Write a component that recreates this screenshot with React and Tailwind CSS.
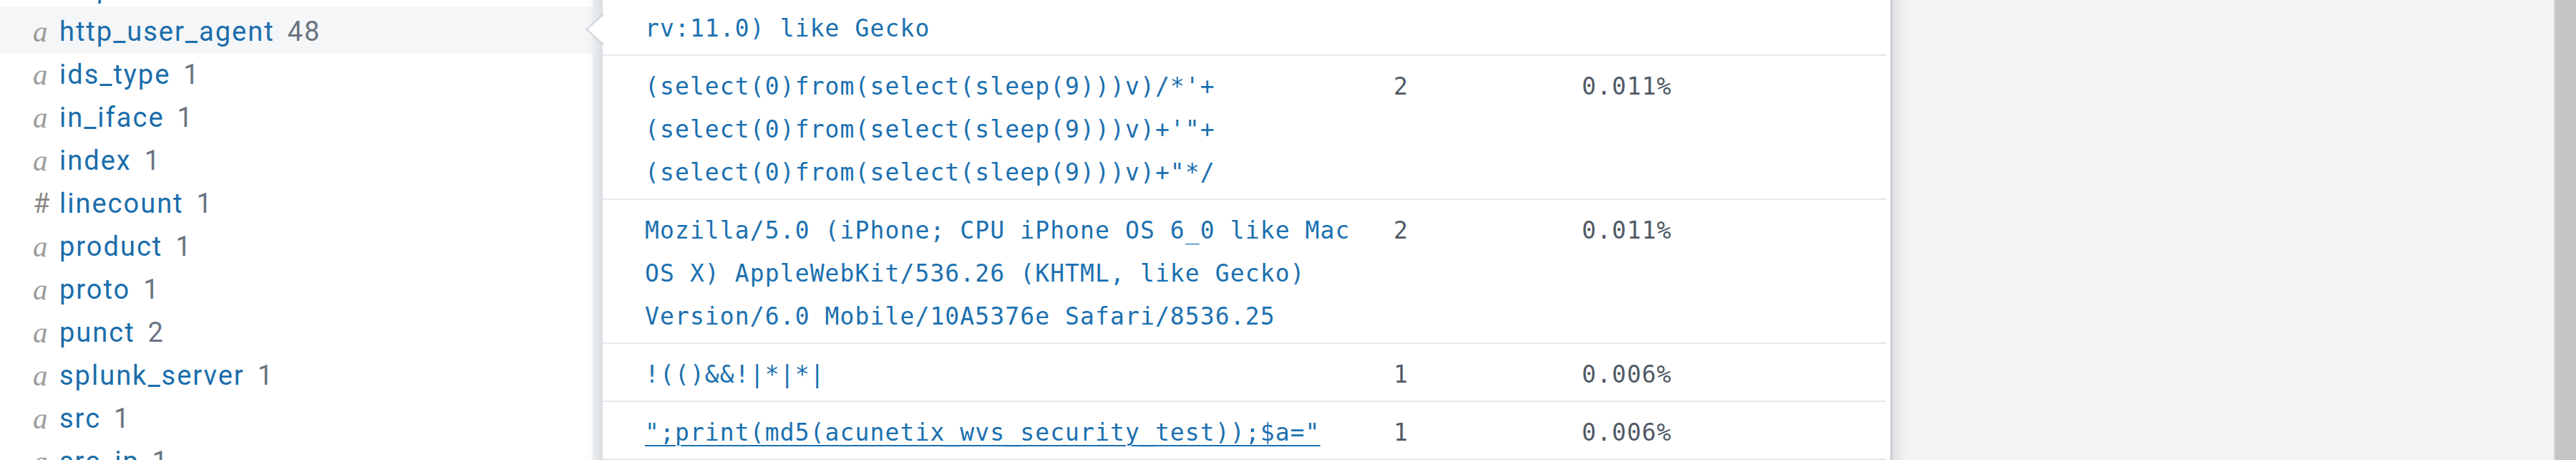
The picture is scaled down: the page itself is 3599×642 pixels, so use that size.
import React from 'react';

const fields = [
  { type: 'a', name: 'http_referrer', count: '1' },
  { type: 'a', name: 'http_user_agent', count: '48', active: true },
  { type: 'a', name: 'ids_type', count: '1' },
  { type: 'a', name: 'in_iface', count: '1' },
  { type: 'a', name: 'index', count: '1' },
  { type: '#', name: 'linecount', count: '1' },
  { type: 'a', name: 'product', count: '1' },
  { type: 'a', name: 'proto', count: '1' },
  { type: 'a', name: 'punct', count: '2' },
  { type: 'a', name: 'splunk_server', count: '1' },
  { type: 'a', name: 'src', count: '1' },
  { type: 'a', name: 'src_ip', count: '1' },
];

const values = [
  {
    lines: ['Mozilla/5.0 (Windows NT 6.1; WOW64; Trident/7.0;', 'rv:11.0) like Gecko'],
    count: '3',
    pct: '0.017%',
  },
  {
    lines: [
      "(select(0)from(select(sleep(9)))v)/*'+",
      '(select(0)from(select(sleep(9)))v)+\'"+',
      '(select(0)from(select(sleep(9)))v)+"*/',
    ],
    count: '2',
    pct: '0.011%',
  },
  {
    lines: [
      'Mozilla/5.0 (iPhone; CPU iPhone OS 6_0 like Mac',
      'OS X) AppleWebKit/536.26 (KHTML, like Gecko)',
      'Version/6.0 Mobile/10A5376e Safari/8536.25',
    ],
    count: '2',
    pct: '0.011%',
  },
  { lines: ['!(()&&!|*|*|'], count: '1', pct: '0.006%' },
  { lines: ['";print(md5(acunetix_wvs_security_test));$a="'], count: '1', pct: '0.006%', hover: true },
  { lines: ['${@print(md5(acunetix_wvs_security_test))}'], count: '1', pct: '0.006%' },
];

const FieldRow = ({ field, first }) => {
  let rowClass = 'h-[60px]';
  if (first) rowClass = 'h-[60px] pt-[5px]';
  if (field.active) rowClass = 'h-[65px] pt-[5px] bg-[#f5f6f8]';

  return (
    <div className={`${rowClass} flex pl-[46px] whitespace-nowrap leading-[60px]`}>
      {field.type === 'a' ? (
        <span className="w-[37px] shrink-0 font-['Liberation_Serif',serif] italic text-[41px] text-[#9b9b9b]">a</span>
      ) : (
        <span className="w-[37px] shrink-0 text-[38px] text-[#8a8a8a]">#</span>
      )}
      <span className="text-[#1a6dab]">{field.name}</span>
      <span className="ml-[18px] text-[#6b7480]">{field.count}</span>
    </div>
  );
};

const ValueRow = ({ value }) => (
  <div className="grid grid-cols-[1046px_263px_1fr] border-b-2 border-[#e3e7ec] pl-[59px] pt-[13px] pb-[6px]">
    <div className="text-[#1b70b0]">
      {value.lines.map((line, i) => (
        <div
          key={i}
          className={`h-[60px] whitespace-pre ${value.hover ? 'underline decoration-2 underline-offset-[6px]' : ''}`}
        >
          {line}
        </div>
      ))}
    </div>
    <div className="text-[#4f5965]">{value.count}</div>
    <div className="text-[#4f5965]">{value.pct}</div>
  </div>
);

export default function App() {
  return (
    <div className="relative flex h-[642px] w-[3599px] overflow-hidden bg-white font-['Roboto',sans-serif]">
      {/* fields sidebar */}
      <div className="w-[840px] shrink-0 bg-white text-[38px] tracking-[2px]">
        <div className="mt-[-51px]">
          {fields.map((f, i) => (
            <FieldRow key={f.name} field={f} first={i === 0} />
          ))}
        </div>
      </div>

      {/* page content behind the popover */}
      <div className="flex-1 bg-[#f2f3f5]" />

      {/* browser scrollbar */}
      <div className="w-[31px] shrink-0 border-l-2 border-[#d8d9d9] bg-[#c3c4c3]" />

      {/* field values popover */}
      <div className="absolute left-[828px] top-[-63px] flex w-[1816px] bg-white shadow-[6px_0_18px_rgba(0,0,0,0.10)]">
        <div className="w-[14px] shrink-0 bg-linear-to-r from-[#eceef1] to-[#d9dde2]" />
        <div className="mr-[6px] flex-1 font-['DejaVu_Sans_Mono',monospace] text-[33px] leading-[60px] tracking-[1.1px]">
          {values.map((v, i) => (
            <ValueRow key={i} value={v} />
          ))}
        </div>
        <div className="w-[3px] shrink-0 bg-[#c9ced5]" />
      </div>

      {/* popover arrow */}
      <svg className="absolute left-[818px] top-[20px]" width="26" height="42" viewBox="0 0 26 42">
        <polygon points="24,0 0,21 24,42 26,42 26,0" fill="#ffffff" />
        <polyline points="25,0 1.5,21 25,42" fill="none" stroke="#cfd3d9" strokeWidth="2" />
      </svg>
    </div>
  );
}
